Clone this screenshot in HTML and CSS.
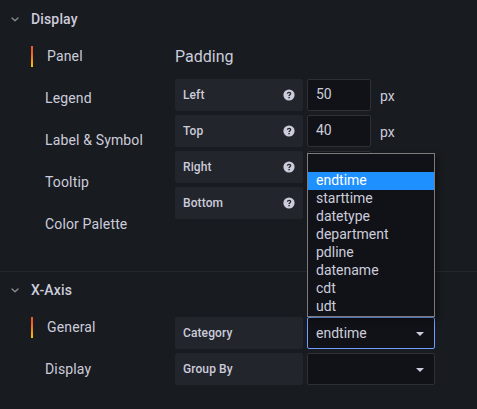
FILE: index.html
```html
<!DOCTYPE html>
<html lang="en">
<head>
<meta charset="utf-8">
<title>Panel options</title>
<link rel="stylesheet" href="styles.css">
</head>
<body>
<svg class="defs" aria-hidden="true">
  <symbol id="chevron" viewBox="0 0 8 5"><path d="M1 1 4 3.7 7 1" fill="none" stroke="currentColor" stroke-width="1.3" stroke-linecap="round" stroke-linejoin="round"/></symbol>
  <symbol id="help" viewBox="0 0 12 12"><circle cx="6" cy="6" r="5.6" fill="currentColor"/><path d="M4.4 4.8C4.5 3.8 5.2 3.3 6.1 3.3c1 0 1.6.5 1.6 1.3 0 1.1-1.6 1.2-1.6 2.4" fill="none" stroke="#22252b" stroke-width="1.3"/><rect x="5.4" y="7.9" width="1.4" height="1.4" fill="#22252b"/></symbol>
  <symbol id="caret" viewBox="0 0 8 4"><path d="M0 0h8L4 4z" fill="currentColor"/></symbol>
</svg>
<section class="section section-display">
  <header class="section-header"><svg class="chevron"><use href="#chevron"/></svg><h2>Display</h2></header>
  <div class="section-body">
    <nav class="tabs">
      <a class="tab active">Panel</a>
      <a class="tab">Legend</a>
      <a class="tab">Label &amp; Symbol</a>
      <a class="tab">Tooltip</a>
      <a class="tab">Color Palette</a>
    </nav>
    <div class="form">
      <h3>Padding</h3>
      <div class="row"><div class="label">Left<svg class="help"><use href="#help"/></svg></div><div class="input">50</div><span class="unit">px</span></div>
      <div class="row"><div class="label">Top<svg class="help"><use href="#help"/></svg></div><div class="input">40</div><span class="unit">px</span></div>
      <div class="row"><div class="label">Right<svg class="help"><use href="#help"/></svg></div><div class="input"></div></div>
      <div class="row"><div class="label">Bottom<svg class="help"><use href="#help"/></svg></div><div class="input"></div></div>
    </div>
  </div>
</section>
<section class="section">
  <header class="section-header"><svg class="chevron"><use href="#chevron"/></svg><h2>X-Axis</h2></header>
  <div class="section-body">
    <nav class="tabs">
      <a class="tab active">General</a>
      <a class="tab">Display</a>
    </nav>
    <div class="form">
      <div class="row">
        <div class="label">Category</div>
        <div class="select focused">endtime<svg class="caret"><use href="#caret"/></svg>
          <ul class="menu">
            <li></li>
            <li class="selected">endtime</li>
            <li>starttime</li>
            <li>datetype</li>
            <li>department</li>
            <li>pdline</li>
            <li>datename</li>
            <li>cdt</li>
            <li>udt</li>
          </ul>
        </div>
      </div>
      <div class="row"><div class="label">Group By</div><div class="select"><svg class="caret"><use href="#caret"/></svg></div></div>
    </div>
  </div>
</section>
</body>
</html>
```
FILE: styles.css
```css
* { box-sizing: border-box; }
body {
  margin: 0;
  height: 409px;
  overflow: hidden;
  background: #181b1f;
  color: #ccccdc;
  font: 14px/22px Roboto, sans-serif;
}
h2, h3, ul { margin: 0; padding: 0; }
.defs { position: absolute; width: 0; height: 0; }
.section-display {
  height: 272px;
  border-bottom: 1px solid #25272c;
}
.section-header {
  display: flex;
  align-items: center;
  height: 37px;
  padding: 0 0 1px 11px;
}
.section-display .section-header { height: 38px; padding-bottom: 0; }
.chevron {
  width: 8px;
  height: 5px;
  margin-right: 12px;
  color: #8e8f98;
}
h2 {
  font-size: 14px;
  font-weight: 500;
  line-height: 22px;
  letter-spacing: .15px;
}
.section-body { display: flex; }
.tabs {
  display: flex;
  flex-direction: column;
  gap: 21px;
  width: 144px;
  margin-left: 31px;
  padding-top: 8px;
  letter-spacing: .15px;
}
.tab {
  height: 21px;
  padding-left: 14px;
  line-height: 21px;
  white-space: nowrap;
}
.tab.active {
  border-left: 2px solid;
  border-image: linear-gradient(#f05a28 30%, #fbca0a) 1;
}
.form { display: flex; flex-direction: column; gap: 4px; padding-top: 8px; }
h3 {
  height: 29px;
  font-size: 16px;
  font-weight: 400;
  line-height: 22px;
}
.row { display: flex; gap: 4px; height: 32px; }
.label {
  display: flex;
  align-items: center;
  justify-content: space-between;
  width: 128px;
  padding: 0 8px;
  border-radius: 2px;
  background: #22252b;
  font-size: 12px;
  font-weight: 500;
  letter-spacing: .1px;
}
.help { width: 12px; height: 12px; }
.input, .select {
  height: 32px;
  padding: 0 8px;
  border: 1px solid #2e3036;
  border-radius: 2px;
  background: #111217;
  line-height: 30px;
}
.input { width: 64px; line-height: 29px; }
.unit { padding-left: 5px; line-height: 34px; }
.select {
  position: relative;
  display: flex;
  align-items: center;
  width: 128px;
}
.focused { border-color: #6e9fff; }
.caret {
  width: 8px;
  height: 4px;
  margin-left: auto;
  margin-top: 2px;
  margin-right: 2px;
}
.menu {
  position: absolute;
  bottom: 31px;
  left: -1px;
  width: 128px;
  border: 1px solid #7c7c7c;
  background: #111217;
  box-shadow: 3px 3px 6px rgba(0, 0, 0, .35);
  list-style: none;
}
.menu li { height: 18px; padding-left: 8px; line-height: 17px; }
.menu .selected { background: #1e90ff; color: #fff; }
```
